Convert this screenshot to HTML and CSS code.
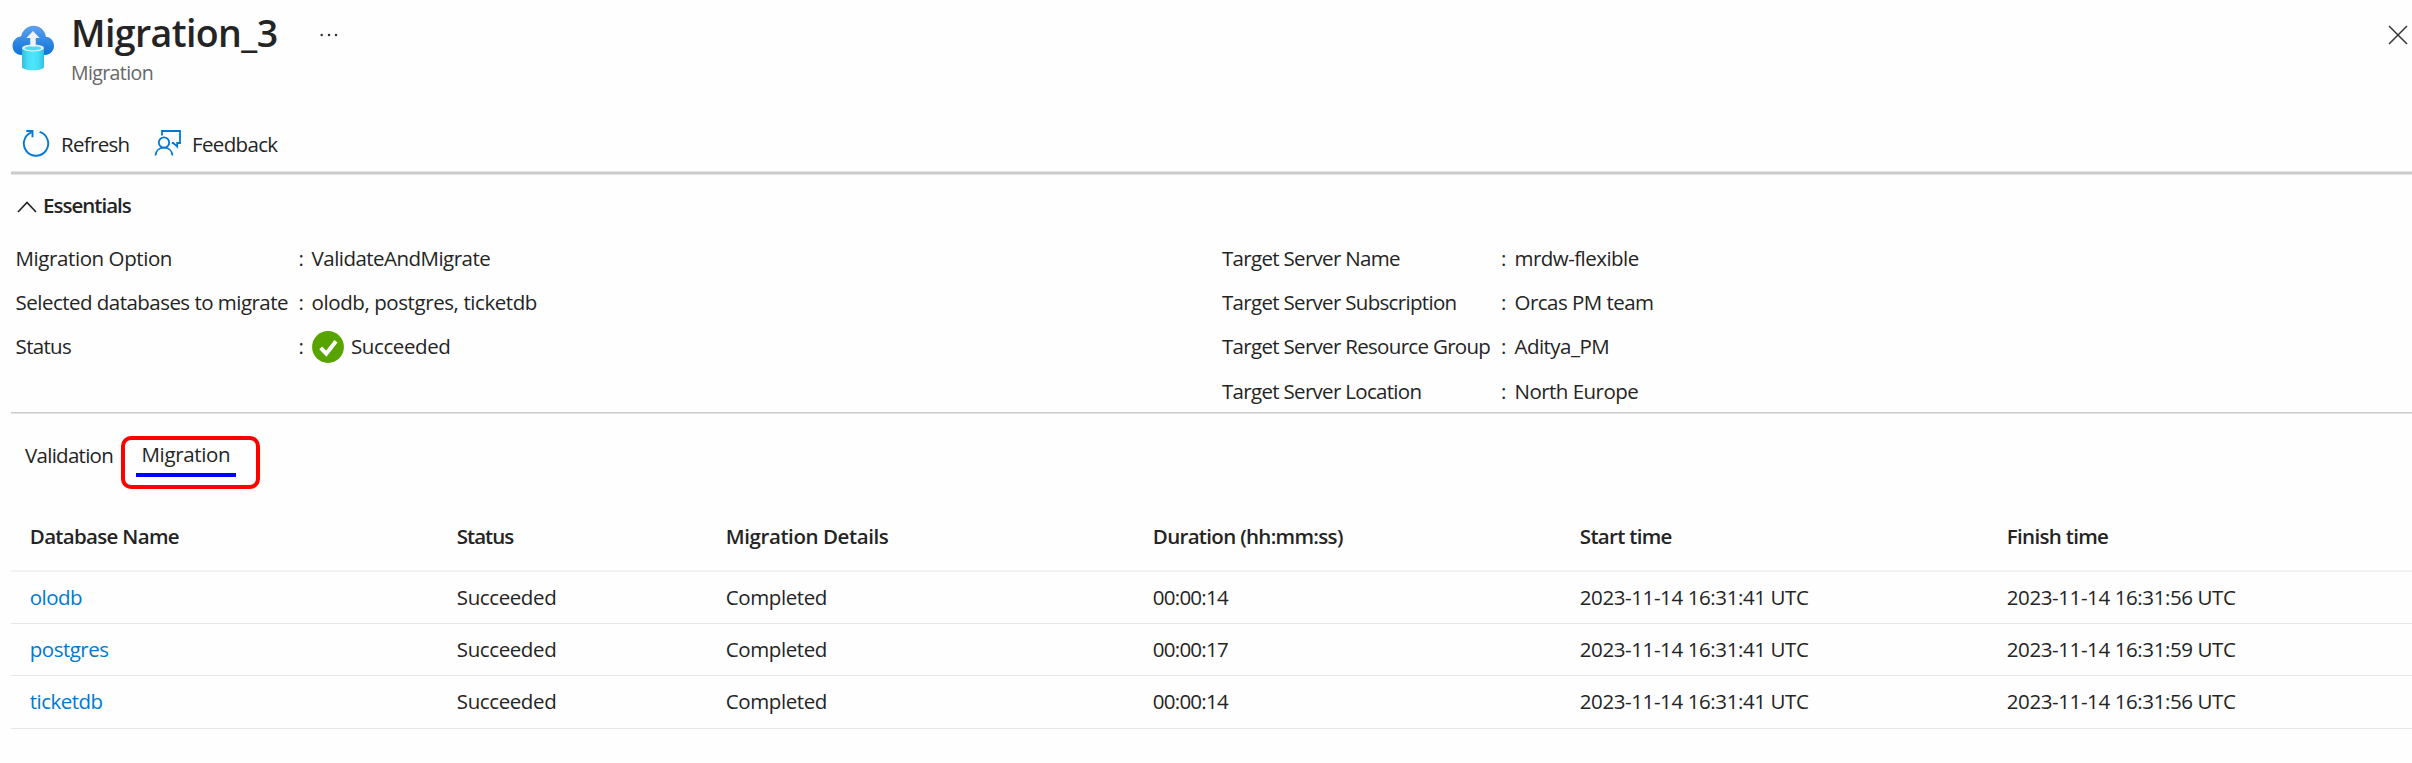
FILE: index.html
```html
<!DOCTYPE html>
<html lang="en">
<head>
<meta charset="utf-8">
<title>Migration_3</title>
<link rel="stylesheet" href="styles.css">
</head>
<body>
<header class="header">
  <svg class="logo" viewBox="0 0 42 46" width="42" height="46">
    <defs>
      <linearGradient id="cloud" x1="0" y1="0" x2="0" y2="1"><stop offset="0" stop-color="#5ea0ef"/><stop offset="1" stop-color="#0a74d8"/></linearGradient>
      <linearGradient id="drum" x1="0" x2="1" y1="0" y2="0"><stop offset="0" stop-color="#32bedd"/><stop offset=".25" stop-color="#47dbf5"/><stop offset=".5" stop-color="#50e6ff"/><stop offset=".75" stop-color="#47dbf5"/><stop offset="1" stop-color="#32bedd"/></linearGradient>
    </defs>
    <path d="M9.500 30C4 29.800.500 25.800.500 20.800c0-5 3.600-9 8.600-9.600C10.600 5.300 15.600.800 21.500.800c6.500 0 11.500 4.600 12.400 10.900 4.600.3 8.100 4.200 8.100 9 0 5.200-4.100 9.300-9.200 9.300z" fill="url(#cloud)"/>
    <path d="M18.500 22.500V13h-4.200L21 6l6.700 7h-4.200v9.500z" fill="#f2f2f2"/>
    <path d="M10 23v19c0 1.800 4.900 3.200 11 3.200S32 43.800 32 42V23z" fill="url(#drum)"/>
    <ellipse cx="21" cy="23" rx="11" ry="3.400" fill="#e8f2f6"/>
    <ellipse cx="21" cy="23.200" rx="8.500" ry="2.200" fill="#4edcf3"/>
    <path d="M18.500 12.500h5v9h-5z" fill="#f2f2f2"/>
  </svg>
  <div class="titles">
    <h1 class="title">Migration_3</h1>
    <p class="subtitle">Migration</p>
  </div>
  <svg class="more" viewBox="0 0 18 4" width="18" height="4" fill="#333"><circle cx="1.700" cy="2" r="1.250"/><circle cx="9" cy="2" r="1.250"/><circle cx="16" cy="2" r="1.250"/></svg>
  <svg class="close" viewBox="0 0 20 20" width="20" height="20"><path d="M1 1l18 18M19 1L1 19" stroke="#333" stroke-width="1.500"/></svg>
</header>

<nav class="toolbar">
  <span class="command">
    <svg class="icon-refresh" viewBox="0 0 28 28" width="28" height="28" fill="none" stroke="#0078d4" stroke-width="1.900"><path d="M9.300 3.300A12.200 12.200 0 1 0 17.600 2.900M4.300 2h6.200v6.200"/></svg>
    <span class="refresh-text">Refresh</span>
  </span>
  <span class="command feedback">
    <svg viewBox="0 0 28 28" width="28" height="28" fill="none" stroke="#0078d4" stroke-width="1.800"><path d="M8 6.500V2h18v12h-2.800v3.600l-4-3.600h-1.400"/><circle cx="10" cy="13.500" r="5.200"/><path d="M1.500 26.500c.3-4.800 3.900-7.800 8.500-7.800s8.200 3 8.500 7.800"/></svg>
    <span class="feedback-text">Feedback</span>
  </span>
</nav>
<div class="rule"></div>

<section class="essentials">
  <h2 class="essentials-title">
    <svg viewBox="0 0 20 12" width="20" height="12"><path d="M1 11l9-9.500L19 11" fill="none" stroke="#242424" stroke-width="1.700"/></svg>
    <span>Essentials</span>
  </h2>
  <div class="columns">
    <dl class="props props-left">
      <dt class="wide">Migration Option</dt><dd>ValidateAndMigrate</dd>
      <dt>Selected databases to migrate</dt><dd class="wide">olodb, postgres, ticketdb</dd>
      <dt class="tight">Status</dt>
      <dd class="status">
        <svg viewBox="0 0 32 32" width="32" height="32"><circle cx="16" cy="16" r="15.900" fill="#57a300"/><path d="M8.700 16.800l5.600 5.900L24 10.200" fill="none" stroke="#fff" stroke-width="4"/></svg>
        <span>Succeeded</span>
      </dd>
    </dl>
    <dl class="props props-right">
      <dt>Target Server Name</dt><dd>mrdw-flexible</dd>
      <dt>Target Server Subscription</dt><dd>Orcas PM team</dd>
      <dt>Target Server Resource Group</dt><dd>Aditya_PM</dd>
      <dt>Target Server Location</dt><dd>North Europe</dd>
    </dl>
  </div>
</section>
<div class="rule rule-thin"></div>

<div class="tabs">
  <span class="tab">Validation</span>
  <span class="tab tab-active">Migration<span class="highlight"></span></span>
</div>

<table class="grid">
  <colgroup><col class="c1"><col class="c2"><col class="c3"><col class="c3"><col class="c3"><col></colgroup>
  <thead>
    <tr><th>Database Name</th><th class="th-status">Status</th><th class="th-details">Migration Details</th><th>Duration (hh:mm:ss)</th><th>Start time</th><th>Finish time</th></tr>
  </thead>
  <tbody>
    <tr><td class="link">olodb</td><td>Succeeded</td><td>Completed</td><td class="time">00:00:14</td><td>2023-11-14 16:31:41 UTC</td><td>2023-11-14 16:31:56 UTC</td></tr>
    <tr><td class="link">postgres</td><td>Succeeded</td><td>Completed</td><td class="time">00:00:17</td><td>2023-11-14 16:31:41 UTC</td><td>2023-11-14 16:31:59 UTC</td></tr>
    <tr><td class="link">ticketdb</td><td>Succeeded</td><td>Completed</td><td class="time">00:00:14</td><td>2023-11-14 16:31:41 UTC</td><td>2023-11-14 16:31:56 UTC</td></tr>
  </tbody>
</table>
</body>
</html>
```
FILE: styles.css
```css
* { box-sizing: border-box; }

body {
  margin: 0;
  height: 763px;
  overflow: hidden;
  background: #fefefe;
  color: #242424;
  font: 400 20.5px/28px "Open Sans", "Noto Sans", sans-serif;
  letter-spacing: -0.4px;
}

h1, h2, p, dl, dd { margin: 0; }
svg { display: block; flex: none; }

.header {
  display: flex;
  align-items: flex-start;
  height: 130px;
  padding: 8px 4px 0 12px;
}
.logo { margin-top: 17px; }
.titles { width: 248px; padding-left: 16px; }
.title {
  margin-left: 1px;
  font-size: 37.5px;
  line-height: 50px;
  font-weight: 600;
  letter-spacing: -0.6px;
}
.subtitle {
  margin: 2px 0 0 1px;
  font-size: 19.5px;
  line-height: 26px;
  letter-spacing: -0.6px;
  color: #666;
}
.more { margin: 25px 0 0 18px; }
.close { margin: 17px 0 0 auto; }

.toolbar {
  display: flex;
  align-items: center;
  height: 41px;
  padding: 0 0 13px 22px;
}
.command { display: flex; gap: 11px; }
.icon-refresh { margin-top: -1px; }
.refresh-text { width: 93px; letter-spacing: -0.7px; }
.feedback { gap: 10px; }
.feedback svg { margin-top: -1px; }
.feedback-text { letter-spacing: -0.65px; }

.rule {
  height: 4px;
  margin-left: 11px;
  background: #ccc;
  border: solid #e4e4e4;
  border-width: 1px 0;
}
.rule-thin { height: 2px; border-width: 0 0 1px; }

.essentials { height: 237px; padding-top: 16px; }
.essentials-title {
  display: flex;
  align-items: center;
  gap: 6px;
  height: 28px;
  padding-left: 17px;
  font-size: 20.5px;
  font-weight: 600;
  letter-spacing: -0.98px;
}
.essentials-title svg { margin-top: 4px; }
.columns {
  display: grid;
  grid-template-columns: 1206px 1fr;
  padding: 16.500px 0 0 15px;
}
.props {
  display: grid;
  grid-auto-rows: 44.4px;
  align-content: start;
  align-items: center;
  letter-spacing: -0.53px;
}
.props-left { grid-template-columns: 283px 1fr; padding-left: 0.6px; }
.props-right { grid-template-columns: 279px 1fr; padding-left: 1px; }
.props-right dt { letter-spacing: -0.69px; }
.props .wide { letter-spacing: -0.42px; }
.props .tight { letter-spacing: -0.7px; }
.props dd { display: flex; align-items: center; }
.props dd::before { content: ":"; width: 13px; }
.props-right dd::before { width: 13.500px; }
.status svg { margin: 1px 7px 0 0.4px; }
.status span { letter-spacing: -0.4px; }

.tabs {
  display: flex;
  align-items: flex-start;
  height: 88px;
  padding: 27px 0 0 25px;
}
.tab { width: 111px; letter-spacing: -0.72px; }
.tab-active {
  position: relative;
  width: 100px;
  height: 37px;
  margin-top: -1px;
  padding-left: 5.5px;
  border-bottom: 4px solid #0000ff;
  letter-spacing: -0.35px;
}
.highlight {
  position: absolute;
  left: -15px;
  top: -4px;
  width: 139px;
  height: 53px;
  border: 4px solid #f00;
  border-radius: 10px;
}

.grid {
  width: 2401px;
  margin-left: 11px;
  table-layout: fixed;
  border-collapse: separate;
  border-spacing: 0;
}
.c1 { width: 427px; }
.c2 { width: 269px; }
.c3 { width: 427px; }
.grid th, .grid td { padding: 0 0 0 18.8px; text-align: left; white-space: nowrap; }
.grid th {
  height: 70px;
  border-bottom: 2px solid #f3f2f1;
  font-weight: 600;
  letter-spacing: -0.68px;
}
.grid .th-status { letter-spacing: -1px; }
.grid .th-details { letter-spacing: -0.42px; }
.grid td { height: 52.200px; padding-bottom: 2px; border-bottom: 1.500px solid #e6e6e6; }
.grid .time { letter-spacing: -0.75px; }
.grid .link { color: #0078d4; letter-spacing: -0.52px; }
```
